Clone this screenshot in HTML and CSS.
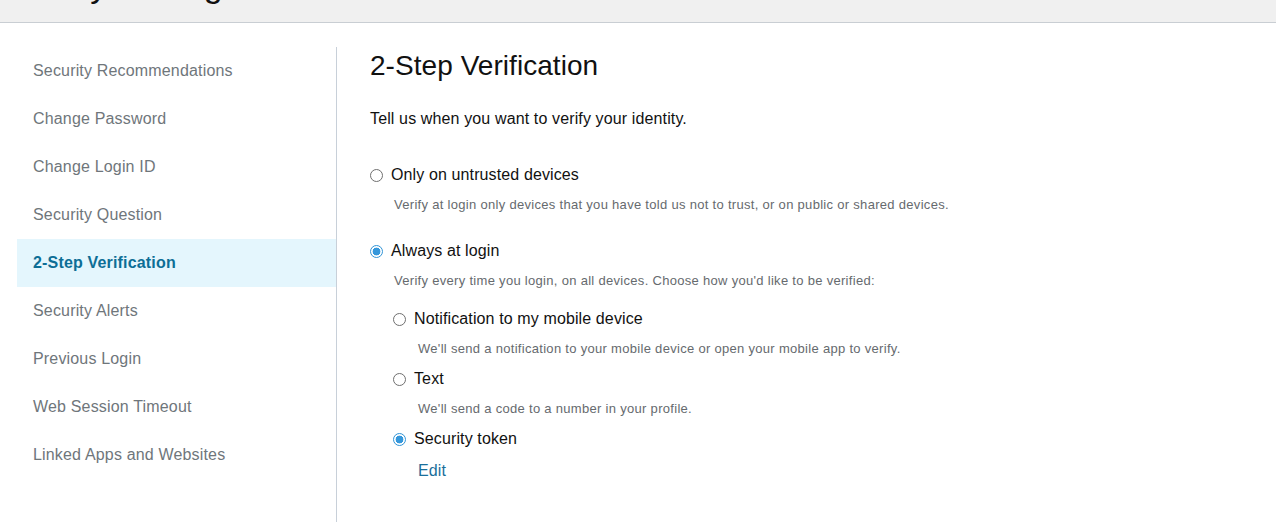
FILE: index.html
```html
<!DOCTYPE html>
<html lang="en">
<head>
<meta charset="utf-8">
<title>2-Step Verification</title>
<link rel="stylesheet" href="styles.css">
</head>
<body>
<header class="page-header">
  <h1 class="page-title">My Settings</h1>
</header>
<div class="layout">
  <nav class="side-nav">
    <a class="nav-item" href="#">Security Recommendations</a>
    <a class="nav-item" href="#">Change Password</a>
    <a class="nav-item" href="#">Change Login ID</a>
    <a class="nav-item" href="#">Security Question</a>
    <a class="nav-item active" href="#">2-Step Verification</a>
    <a class="nav-item" href="#">Security Alerts</a>
    <a class="nav-item" href="#">Previous Login</a>
    <a class="nav-item" href="#">Web Session Timeout</a>
    <a class="nav-item" href="#">Linked Apps and Websites</a>
  </nav>
  <main class="content">
    <h2 class="content-title">2-Step Verification</h2>
    <p class="intro">Tell us when you want to verify your identity.</p>

    <div class="option">
      <label class="choice"><span class="radio"></span>Only on untrusted devices</label>
      <p class="hint">Verify at login only devices that you have told us not to trust, or on public or shared devices.</p>
    </div>

    <div class="option">
      <label class="choice"><span class="radio checked"></span>Always at login</label>
      <p class="hint">Verify every time you login, on all devices. Choose how you'd like to be verified:</p>

      <div class="sub-options">
        <label class="choice"><span class="radio"></span>Notification to my mobile device</label>
        <p class="hint">We'll send a notification to your mobile device or open your mobile app to verify.</p>
        <label class="choice"><span class="radio"></span>Text</label>
        <p class="hint">We'll send a code to a number in your profile.</p>
        <label class="choice"><span class="radio checked"></span>Security token</label>
        <a class="edit-link" href="#">Edit</a>
      </div>
    </div>
  </main>
</div>
</body>
</html>
```

FILE: styles.css
```css
* {
  box-sizing: border-box;
}

body {
  margin: 0;
  background: #ffffff;
  font-family: "Liberation Sans", Arial, sans-serif;
  color: #111111;
}

/* Top bar; the page title sits mostly above the visible area */
.page-header {
  height: 23px;
  background: #f0f0f0;
  border-bottom: 1px solid #c9ced3;
  overflow: hidden;
  display: flex;
  align-items: flex-end;
  padding-left: 62px;
}

.page-title {
  margin: 0 0 20px;
  font-size: 34px;
  font-weight: normal;
  line-height: 34px;
  color: #111111;
}

.layout {
  display: flex;
  align-items: flex-start;
}

/* Left navigation */
.side-nav {
  display: flex;
  flex-direction: column;
  width: 337px;
  margin-top: 24px;
  padding: 0 0 43px 17px;
  border-right: 1px solid #c8d0d9;
}

.nav-item {
  display: flex;
  align-items: center;
  height: 48px;
  padding-left: 16px;
  font-size: 16px;
  letter-spacing: 0.17px;
  color: #6f767b;
  text-decoration: none;
}

.nav-item.active {
  background: #e4f6fd;
  color: #0d6e96;
  font-weight: bold;
}

/* Settings panel */
.content {
  padding: 25px 0 0 33px;
}

.content-title {
  margin: 0;
  font-size: 28px;
  font-weight: normal;
  line-height: 36px;
  letter-spacing: 0.05px;
  color: #111111;
}

.intro {
  margin: 25px 0 0;
  font-size: 16px;
  line-height: 20px;
  letter-spacing: 0.13px;
}

.option {
  margin-top: 36px;
}

.option + .option {
  margin-top: 28px;
}

.choice {
  display: flex;
  align-items: center;
  gap: 8px;
  font-size: 16px;
  line-height: 20px;
  letter-spacing: 0.12px;
  color: #111111;
}

.radio {
  width: 13px;
  height: 13px;
  border-radius: 50%;
  border: 1px solid #6f6f6f;
  background: #ffffff;
  flex: none;
}

.radio.checked {
  border-color: #3194d6;
  background: radial-gradient(circle, #3597db 0 3.6px, #ffffff 4.2px);
}

.hint {
  margin: 12px 0 0 24px;
  font-size: 13px;
  line-height: 16px;
  letter-spacing: 0.3px;
  color: #666a6e;
}

.sub-options {
  display: flex;
  flex-direction: column;
  align-items: flex-start;
  gap: 12px;
  margin: 20px 0 0 23px;
}

.sub-options .hint {
  margin: 0 0 0 25px;
}

.edit-link {
  margin-left: 25px;
  font-size: 16px;
  line-height: 20px;
  letter-spacing: 0.12px;
  color: #1a6f9b;
  text-decoration: none;
}
```
